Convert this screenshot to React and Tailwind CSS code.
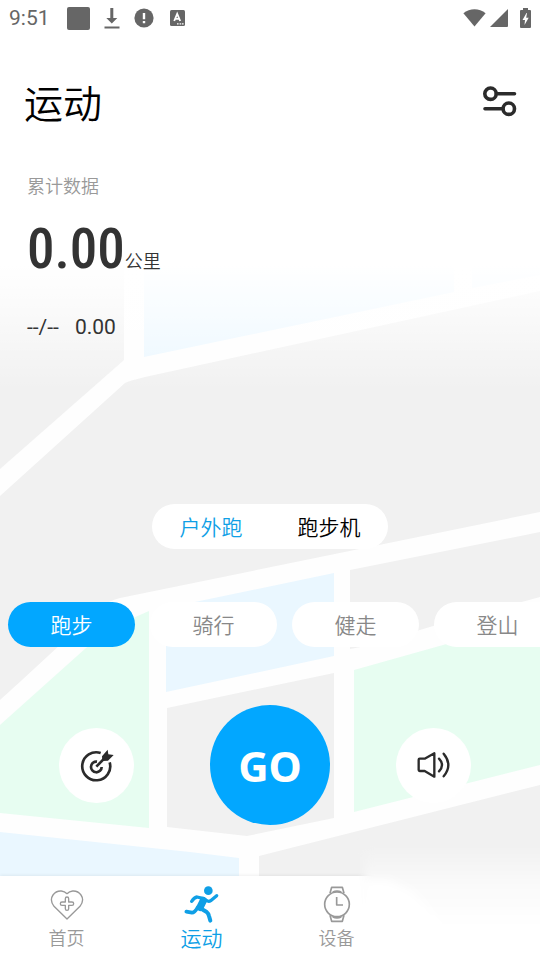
import React, { useState } from "react";

const modes = ["户外跑", "跑步机"];
const sports = ["跑步", "骑行", "健走", "登山"];

const MapBackground = () => (
  <svg
    className="absolute inset-0 w-full h-full"
    viewBox="0 0 540 960"
    preserveAspectRatio="xMidYMid slice"
    aria-hidden="true"
  >
    <defs>
      <linearGradient id="topFade" x1="0" y1="0" x2="0" y2="1">
        <stop offset="0" stopColor="#fff" />
        <stop offset="0.68" stopColor="#fff" />
        <stop offset="0.8" stopColor="#fff" stopOpacity="0.65" />
        <stop offset="1" stopColor="#fff" stopOpacity="0" />
      </linearGradient>
    </defs>
    <rect width="540" height="960" fill="#fefefe" />
    <g fill="#f1f1f1">
      <path d="M0 200H124V360L0 469Z" />
      <path d="M0 496L125 383Q128 381 145 377L540 291V512L120 598Q108 601 100 608L22 680L0 700Z" />
      <path d="M350 570L540 532V597L440 624L366 646L350 649Z" />
      <path d="M167 708L334 673V818L247 836L167 827Z" />
      <path d="M259 856L540 785V960H259Z" />
    </g>
    <g fill="#eaf7ff">
      <path d="M144 200H454V292L144 357Z" />
      <path d="M472 200H540V275L472 288Z" />
      <path d="M166 608L334 573V656L166 692Z" />
      <path d="M0 832L190 852L239 858V960H0Z" />
    </g>
    <g fill="#e7fdf1">
      <path d="M149 611L133 618L86 648L0 725V813L149 828Z" />
      <path d="M354 670L443 645L540 618V765L354 812Z" />
    </g>
    <rect width="540" height="390" fill="url(#topFade)" />
  </svg>
);

const StatusBar = () => (
  <div className="flex items-center justify-between h-9 pl-[9px] pr-[9px] text-[#666]">
    <div className="flex items-center">
      <span className="w-[42px] font-['Roboto',sans-serif] font-normal text-[21px] leading-6">9:51</span>
      <svg className="ml-4" width="23" height="23" viewBox="0 0 23 23" fill="currentColor">
        <rect width="23" height="23" rx="2" />
      </svg>
      <svg className="ml-3.5" width="16" height="21" viewBox="0 0 16 21" fill="currentColor">
        <path d="M6.3 0h3v10h4L7.8 15.5 2.3 10h4zM.5 18.5h15v2H.5z" />
      </svg>
      <svg className="ml-3.5" width="20" height="20" viewBox="0 0 20 20">
        <circle cx="10" cy="10" r="9.6" fill="currentColor" />
        <path d="M10 5v6.2M10 13v2.2" stroke="#fff" strokeWidth="2.4" />
      </svg>
      <svg className="ml-4" width="15" height="16" viewBox="0 0 15 16">
        <rect width="15" height="16" rx="1.5" fill="currentColor" />
        <path d="M4.2 11L7.2 3.8L10.2 11M5.2 8.8h4" stroke="#fff" strokeWidth="1.8" fill="none" />
        <path d="M7 13.8h1.6M9.6 13.8h1.6M12 13.8h1.6" stroke="#fff" strokeWidth="1.2" />
      </svg>
    </div>
    <div className="flex items-center">
      <svg width="23" height="18" viewBox="0 0 23 18" fill="currentColor">
        <path d="M.4 4.2C6.8-1 16.2-1 22.6 4.2L11.5 17.6Z" />
      </svg>
      <svg className="ml-1" width="18" height="18" viewBox="0 0 18 18" fill="currentColor">
        <path d="M0 18L18 0V17Q18 18 17 18Z" />
      </svg>
      <svg className="ml-3" width="11" height="20" viewBox="0 0 11 20">
        <path d="M3 0h5v2h2q1 0 1 1v16q0 1-1 1H1q-1 0-1-1V3q0-1 1-1h2z" fill="currentColor" />
        <path d="M6.5 5L2.5 12H5L4.5 17L8.7 9.8H6.2L7 5Z" fill="#fff" />
      </svg>
    </div>
  </div>
);

const SlidersIcon = () => (
  <svg width="34" height="31" viewBox="0 0 34 31" fill="none" stroke="#2b2b2b" strokeWidth="3.6" strokeLinecap="round">
    <circle cx="7.5" cy="7.7" r="5.7" />
    <path d="M13.5 7.7H31.5M2 22.7H19" />
    <circle cx="25.8" cy="22.7" r="5.7" />
  </svg>
);

const TargetIcon = () => (
  <svg width="34" height="34" viewBox="0 0 102 102" fill="none" stroke="#2b2b2b" strokeWidth="8">
    <path d="M62 15A42 42 0 1 0 89 43" />
    <path d="M51 41A16 16 0 1 0 65 57" />
    <path d="M49 56L76 28" />
    <path d="M66 25L83 5L85 19L101 21L84 38L67 39Z" fill="#2b2b2b" stroke="none" />
  </svg>
);

const SpeakerIcon = () => (
  <svg width="33" height="26" viewBox="0 0 99 78" fill="none" stroke="#2b2b2b" strokeWidth="7" strokeLinejoin="round" strokeLinecap="round">
    <path d="M8 20H23L52 4V74L23 57H8Q5 57 5 54V23Q5 20 8 20Z" />
    <path d="M66 20Q84 39 66 58M80 5Q108 39 80 73" />
  </svg>
);

const HeartIcon = () => (
  <svg width="34" height="32" viewBox="0 0 102 96" fill="none" stroke="#999" strokeWidth="4" strokeLinejoin="round">
    <path d="M51 90L12 52Q-2 34 9 18Q18 5 34 6Q44 7 51 14Q58 7 68 6Q84 5 93 18Q104 34 90 52Z" />
    <path d="M51 24Q56 24 56 29V39H66Q71 39 71 44Q71 49 66 49H56V59Q56 64 51 64Q46 64 46 59V49H36Q31 49 31 44Q31 39 36 39H46V29Q46 24 51 24Z" />
  </svg>
);

const RunnerIcon = () => (
  <svg width="36" height="38" viewBox="0 0 108 114" fill="none" stroke="#0f9fe6" strokeLinecap="round" strokeLinejoin="round">
    <circle cx="73" cy="14" r="13" fill="#0f9fe6" stroke="none" />
    <path d="M23 46Q31 34 39 33L60 38Q72 50 80 44L98 29" strokeWidth="10" />
    <path d="M58 44L48 64" strokeWidth="22" />
    <path d="M41 64Q32 80 24 80L7 77" strokeWidth="11" />
    <path d="M48 66L68 78Q73 82 75 90L79 104" strokeWidth="12" />
  </svg>
);

const WatchIcon = () => (
  <svg width="28" height="37" viewBox="0 0 84 111" fill="none" stroke="#999" strokeWidth="5" strokeLinejoin="round">
    <circle cx="42" cy="55" r="37" />
    <path d="M21 22L26 4H58L63 22M29 18Q42 13 55 18M21 88L26 106H58L63 88M29 93Q42 98 55 93" />
    <path d="M41 33V57H60" />
  </svg>
);

const navItems = [
  { label: "首页", icon: <HeartIcon /> },
  { label: "运动", icon: <RunnerIcon />, active: true },
  { label: "设备", icon: <WatchIcon /> },
];

const CornerFade = () => (
  <svg
    className="absolute right-0 bottom-0 w-[35%] h-32 pointer-events-none"
    viewBox="0 0 189 128"
    preserveAspectRatio="none"
    aria-hidden="true"
  >
    <defs>
      <linearGradient id="cornerFade" x1="0" y1="0" x2="0" y2="1">
        <stop offset="0" stopColor="#f1f1f1" />
        <stop offset="0.1" stopColor="#f4f4f4" />
        <stop offset="0.2" stopColor="#f8f8f8" />
        <stop offset="0.37" stopColor="#fcfcfc" />
        <stop offset="0.5" stopColor="#fefefe" />
        <stop offset="0.6" stopColor="#fff" />
      </linearGradient>
      <filter id="cornerBlur" x="-20%" y="-20%" width="140%" height="140%">
        <feGaussianBlur stdDeviation="4" />
      </filter>
    </defs>
    <path d="M14 14H220V160H14Z" fill="url(#cornerFade)" filter="url(#cornerBlur)" />
    <path d="M12 48H38L62 60L95 95V160H12Z" fill="#fff" filter="url(#cornerBlur)" />
  </svg>
);

const BottomNav = () => (
  <nav className="relative grid grid-cols-4 h-21 bg-white shadow-[0_-1px_3px_rgba(0,0,0,0.06)]">
    <CornerFade />
    {navItems.map((item) => (
      <a key={item.label} href="#" className="relative flex flex-col items-center pt-2 pr-0.5">
        <span className="flex items-center justify-center h-[41px]">{item.icon}</span>
        <span
          className={
            item.active
              ? "text-[21px] leading-6 text-[#0f9fe6]"
              : "text-[18px] leading-6 text-[#999]"
          }
        >
          {item.label}
        </span>
      </a>
    ))}
  </nav>
);

const App = () => {
  const [mode, setMode] = useState("户外跑");
  const [sport, setSport] = useState("跑步");

  return (
    <div className="relative min-h-screen overflow-hidden bg-white font-[350] font-['Noto_Sans_CJK_SC',sans-serif]">
      <MapBackground />
      <div className="relative flex flex-col min-h-screen">
        <StatusBar />

        <header className="flex items-center justify-between mt-[38px] pl-6 pr-[23px]">
          <h1 className="text-[39px] leading-[54px] font-[350] text-black">运动</h1>
          <button type="button" aria-label="设置">
            <SlidersIcon />
          </button>
        </header>

        <section className="pl-[27px] pt-[45px]">
          <p className="text-[18px] leading-6 text-[#999]">累计数据</p>
          <p className="flex items-baseline mt-[22px] text-[#333]">
            <span className="font-['Roboto_Condensed','Roboto',sans-serif] font-medium text-[55px] leading-[60px]">0.00</span>
            <span className="text-[18px] leading-6">公里</span>
          </p>
          <p className="flex gap-4 mt-9 font-['Roboto',sans-serif] font-normal text-[21px] leading-6 text-[#333]">
            <span>--/--</span>
            <span>0.00</span>
          </p>
        </section>

        <div className="flex-1" />

        <div className="flex self-center w-[236px] h-[45px] rounded-full bg-white">
          {modes.map((m) => (
            <button
              key={m}
              type="button"
              onClick={() => setMode(m)}
              className={`flex-1 pb-0.5 text-[21px] leading-6 ${mode === m ? "text-[#0f9fe6]" : "text-black"}`}
            >
              {m}
            </button>
          ))}
        </div>

        <div className="flex gap-[15px] mt-[53px] pl-2 overflow-hidden">
          {sports.map((s) => (
            <button
              key={s}
              type="button"
              onClick={() => setSport(s)}
              className={`shrink-0 w-[127px] h-[45px] pb-0.5 rounded-full text-[21px] leading-6 ${
                sport === s ? "bg-[#02a7ff] text-white" : "bg-white text-[#888]"
              }`}
            >
              {s}
            </button>
          ))}
        </div>

        <div className="flex items-center mt-[58px] mb-[51px]">
          <div className="flex flex-1 justify-end">
            <button type="button" aria-label="目标" className="flex items-center justify-center mr-19 size-[75px] rounded-full bg-white">
              <TargetIcon />
            </button>
          </div>
          <button
            type="button"
            className="size-[120px] rounded-full bg-[#02a7ff] text-white font-['Noto_Sans',sans-serif] font-bold text-[42px]"
          >
            GO
          </button>
          <div className="flex flex-1 justify-start">
            <button type="button" aria-label="声音" className="flex items-center justify-center ml-[66px] size-[75px] rounded-full bg-white">
              <SpeakerIcon />
            </button>
          </div>
        </div>

        <BottomNav />
      </div>
    </div>
  );
};

export default App;
